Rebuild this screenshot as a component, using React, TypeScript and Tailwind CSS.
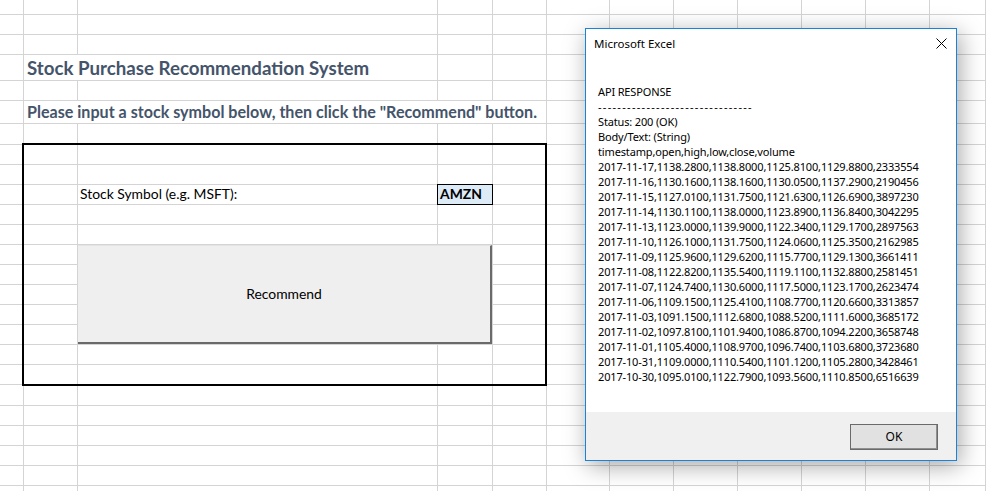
import React from 'react';

const lines = [
  '2017-11-17,1138.2800,1138.8000,1125.8100,1129.8800,2333554',
  '2017-11-16,1130.1600,1138.1600,1130.0500,1137.2900,2190456',
  '2017-11-15,1127.0100,1131.7500,1121.6300,1126.6900,3897230',
  '2017-11-14,1130.1100,1138.0000,1123.8900,1136.8400,3042295',
  '2017-11-13,1123.0000,1139.9000,1122.3400,1129.1700,2897563',
  '2017-11-10,1126.1000,1131.7500,1124.0600,1125.3500,2162985',
  '2017-11-09,1125.9600,1129.6200,1115.7700,1129.1300,3661411',
  '2017-11-08,1122.8200,1135.5400,1119.1100,1132.8800,2581451',
  '2017-11-07,1124.7400,1130.6000,1117.5000,1123.1700,2623474',
  '2017-11-06,1109.1500,1125.4100,1108.7700,1120.6600,3313857',
  '2017-11-03,1091.1500,1112.6800,1088.5200,1111.6000,3685172',
  '2017-11-02,1097.8100,1101.9400,1086.8700,1094.2200,3658748',
  '2017-11-01,1105.4000,1108.9700,1096.7400,1103.6800,3723680',
  '2017-10-31,1109.0000,1110.5400,1101.1200,1105.2800,3428461',
  '2017-10-30,1095.0100,1122.7900,1093.5600,1110.8500,6516639',
];

// 25 rows x 12 cols, minus the 18 cells taken by the placed items below
const FILLERS = 25 * 12 - 18;

const cell = 'border-r border-b border-[#d4d4d4]';

function Sheet() {
  return (
    <div
      className="grid grid-cols-[24px_54px_360px_55px_54px_63px_64px_64px_64px_64px_64px_1fr] grid-rows-[15px_20px_20px_26px_20px_23px_21px_20px_20px_20px_20px_20px_20px_20px_20px_20px_20px_20px_20px_21px_20px_20px_20px_20px_6px]"
      style={{ fontFamily: 'Lato, "Open Sans", sans-serif' }}
    >
      <div className={`${cell} col-start-2 col-span-2 row-start-4 flex items-center whitespace-nowrap pl-[3px] pt-[1px] text-[18.7px] font-bold text-[#44546A]`}>
        Stock Purchase Recommendation System
      </div>
      <div className={`${cell} col-start-2 col-span-4 row-start-6 flex items-center whitespace-nowrap pl-[3px] text-[16.1px] font-bold text-[#44546A]`}>
        Please input a stock symbol below, then click the "Recommend" button.
      </div>
      <div className={`${cell} col-start-3 row-start-10 flex items-center whitespace-nowrap pl-[2px] text-[13.9px] text-black`}>
        Stock Symbol (e.g. MSFT):
      </div>
      <div className="relative z-10 col-start-4 row-start-10 -ml-px -mt-px flex items-center border border-black bg-[#DDEBF7] pl-[2px] text-[13.9px] font-bold text-black">
        AMZN
      </div>
      <div className="col-start-3 col-span-2 row-start-13 row-span-5 -ml-px flex border-r border-b border-[#d4d4d4]">
        <button className="flex-1 border-t border-l border-[#e4e4e4] border-r-2 border-b-2 border-r-[#6a6a6a] border-b-[#6a6a6a] bg-[#EFEFEF] text-[13.9px] text-black">
          Recommend
        </button>
      </div>
      {Array.from({ length: FILLERS }).map((_, i) => (
        <div key={i} className={cell} />
      ))}
    </div>
  );
}

function MsgBox() {
  return (
    <div
      className="absolute left-[585px] top-[28px] flex h-[433px] w-[372px] flex-col border border-[#1883D7] bg-white shadow-[3px_5px_22px_rgba(0,0,0,0.35)]"
      style={{ fontFamily: '"Segoe UI", "Noto Sans", sans-serif' }}
    >
      <div className="flex h-[29px] items-center justify-between pl-[8px] pr-[9px] text-[11.5px] text-black">
        <span>Microsoft Excel</span>
        <svg width="11" height="11" viewBox="0 0 11 11">
          <path d="M0.5 0.5 L10.5 10.5 M10.5 0.5 L0.5 10.5" stroke="#000" strokeWidth="1" />
        </svg>
      </div>
      <div className="flex-1 pl-[12px] pt-[26px] text-[11px] leading-[15px] tracking-[-0.15px] text-black">
        <div>API RESPONSE</div>
        <div className="tracking-[1.3px]">--------------------------------</div>
        <div>Status: 200 (OK)</div>
        <div>Body/Text: (String)</div>
        <div>timestamp,open,high,low,close,volume</div>
        {lines.map((l) => (
          <div key={l}>{l}</div>
        ))}
      </div>
      <div className="flex h-[48px] items-start justify-end bg-[#F0F0F0] pr-[18px] pt-[12px]">
        <button className="h-[26px] w-[88px] border border-[#6a6a6a] bg-[#E1E1E1] text-[12px] text-black shadow-[inset_-1px_-1px_0_#8f8f8f]">
          OK
        </button>
      </div>
    </div>
  );
}

export default function App() {
  return (
    <div className="relative h-[491px] w-[986px] overflow-hidden bg-white">
      <Sheet />
      <div className="pointer-events-none absolute left-[22px] top-[143px] h-[243px] w-[525px] border-2 border-black" />
      <MsgBox />
    </div>
  );
}
